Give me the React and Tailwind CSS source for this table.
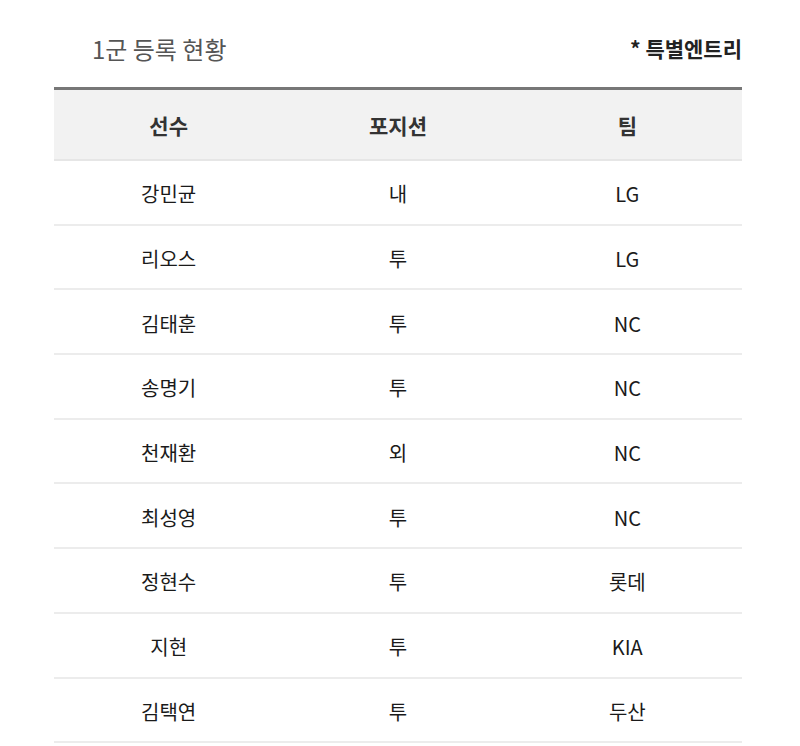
const rows = [
  ['강민균', '내', 'LG'],
  ['리오스', '투', 'LG'],
  ['김태훈', '투', 'NC'],
  ['송명기', '투', 'NC'],
  ['천재환', '외', 'NC'],
  ['최성영', '투', 'NC'],
  ['정현수', '투', '롯데'],
  ['지현', '투', 'KIA'],
  ['김택연', '투', '두산'],
];

export default function App() {
  return (
    <div
      className="w-[800px] h-[746px] bg-white overflow-hidden"
      style={{ fontFamily: '"Noto Sans CJK KR", "Noto Sans", sans-serif' }}
    >
      <div className="ml-[54px] w-[688px]">
        {/* title */}
        <div className="flex items-center justify-between h-[87px] pt-[10px]">
          <div className="pl-[38px] text-[24px] text-[#555]">1군 등록 현황</div>
          <div className="text-[21px] font-bold text-[#222]">* 특별엔트리</div>
        </div>

        {/* table */}
        <div className="border-t-[3px] border-[#777]">
          <div className="grid grid-cols-3 h-[71px] items-center pt-[2px] bg-[#f2f2f2] border-b-2 border-[#e6e6e6] text-[21px] font-bold text-[#333] text-center">
            <div>선수</div>
            <div>포지션</div>
            <div>팀</div>
          </div>
          {rows.map((r, i) => (
            <div
              key={i}
              className="grid grid-cols-3 h-[64.7px] items-center pt-[4px] border-b-2 border-[#ececec] text-[20px] text-[#1a1a1a] text-center"
            >
              <div>{r[0]}</div>
              <div>{r[1]}</div>
              <div>{r[2]}</div>
            </div>
          ))}
        </div>
      </div>
    </div>
  );
}
